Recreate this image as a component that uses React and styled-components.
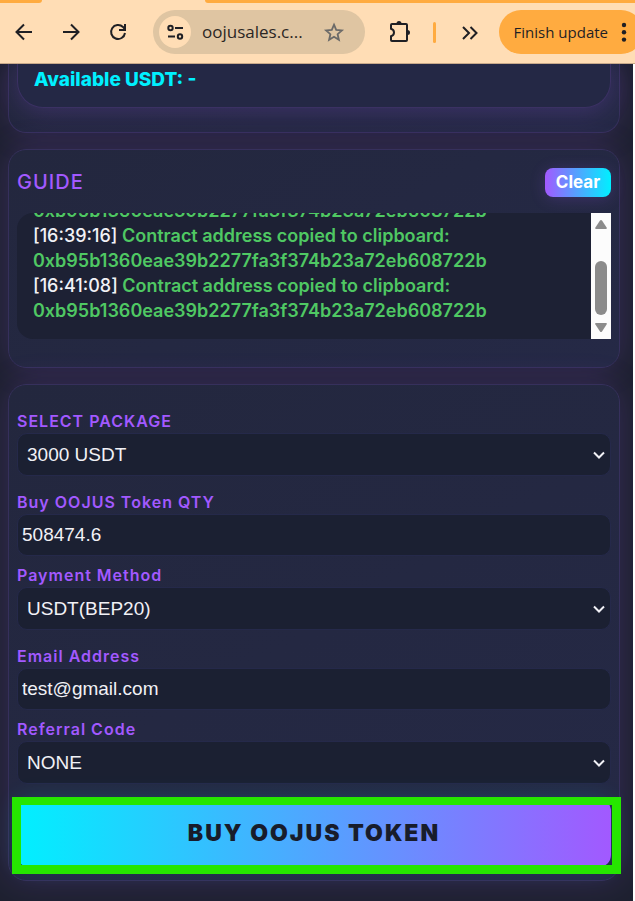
import React, { useState } from "react";
import styled, { createGlobalStyle } from "styled-components";

const GlobalStyle = createGlobalStyle`
  * {
    box-sizing: border-box;
  }

  body {
    margin: 0;
    background: #fff;
    font-family: "Inter", "Liberation Sans", sans-serif;
    overflow-x: hidden;
  }

  button,
  input,
  select {
    font: inherit;
    margin: 0;
  }
`;

/* Browser bar */

const Browser = styled.header`
  background-color: #ffddb5;
  border-bottom: 1px solid #c8a98a;
  overflow: hidden;
`;

const TabStrip = styled.div`
  height: 3px;
  display: flex;
  background-color: #ffddb5;
`;

const TabEdge = styled.div`
  background-color: #ffab40;
  height: 3px;
  flex: ${(props) => (props.$grow ? "1" : "0 0 42px")};
  border-radius: ${(props) => (props.$grow ? "0 0 0 6px" : "0 0 6px 0")};
`;

const ActiveTab = styled.div`
  width: 163px;
`;

const Toolbar = styled.div`
  height: 60px;
  display: flex;
  align-items: center;
  padding-left: 12px;
  padding-bottom: 2px;
`;

const IconButton = styled.button`
  background: none;
  border: none;
  padding: 0;
  width: 24px;
  height: 24px;
  flex: none;
  margin-right: ${(props) => props.$space || 0}px;
  color: #1f1f24;
  cursor: pointer;

  svg {
    display: block;
  }
`;

const UrlPill = styled.div`
  flex: 1;
  min-width: 0;
  height: 44px;
  display: flex;
  align-items: center;
  margin-right: 23px;
  padding: 0 19px 0 6px;
  border-radius: 22px;
  background-color: #dfc5a2;
`;

const SiteInfo = styled.button`
  width: 32px;
  height: 32px;
  flex: none;
  padding: 4px;
  border: none;
  border-radius: 50%;
  background-color: #ffddb5;
  color: #1f1f24;

  svg {
    display: block;
  }
`;

const Url = styled.span`
  flex: 1;
  min-width: 0;
  margin-left: 11px;
  font-family: "Open Sans", "Noto Sans", sans-serif;
  font-size: 17px;
  line-height: 24px;
  white-space: nowrap;
  color: #2b2724;
`;

const Divider = styled.div`
  width: 3px;
  height: 21px;
  flex: none;
  margin-right: 22px;
  border-radius: 2px;
  background-color: #ffab40;
`;

const UpdateButton = styled.button`
  height: 44px;
  flex: none;
  display: flex;
  align-items: center;
  gap: 4px;
  margin-right: -8px;
  padding: 0 7px 0 15px;
  border: none;
  border-radius: 22px;
  background-color: #ffab40;
  color: #1f1f24;
  font-family: "Open Sans", "Noto Sans", sans-serif;
  font-size: 15px;
  white-space: nowrap;
`;

/* Page */

const Page = styled.main`
  margin-right: 2px;
  padding: 0 13px 20px 8px;
  display: flex;
  flex-direction: column;
  gap: 16px;
  overflow: hidden;
  background-color: #1e2130;
`;

const Card = styled.section`
  padding: ${(props) => props.$padding};
  border: 1px solid #36305c;
  border-radius: 18px;
  background: linear-gradient(150deg, #23273e, #252946);
  box-shadow: 0 0 32px rgba(162, 89, 255, 0.18);
`;

const TopCard = styled(Card)`
  border-top: none;
  border-radius: 0 0 18px 18px;
`;

const Balance = styled.div`
  padding: 4px 16px 15px;
  border: 1px solid #3b3163;
  border-top: none;
  border-radius: 0 0 26px 26px;
  background-color: #242845;
  box-shadow: 0 4px 24px rgba(162, 89, 255, 0.2);
  color: #00f0ff;
  font-size: 19px;
  font-weight: 800;
  line-height: 24px;
`;

const GuideHeader = styled.div`
  display: flex;
  align-items: center;
  justify-content: space-between;
  margin-bottom: 16px;
`;

const GuideTitle = styled.h2`
  margin: 0;
  color: #a259ff;
  font-size: 20px;
  font-weight: 500;
  line-height: 29px;
  letter-spacing: 1px;
`;

const ClearButton = styled.button`
  height: 29px;
  width: 66px;
  padding: 0 0 2px;
  border: none;
  border-radius: 8px;
  background: linear-gradient(90deg, #a259ff, #00f0ff);
  box-shadow: 0 2px 16px rgba(162, 89, 255, 0.2);
  color: #fff;
  font-size: 17px;
  font-weight: 700;
  cursor: pointer;
`;

const LogBox = styled.div`
  height: 126px;
  display: flex;
  border-radius: 16px 0 0 16px;
  background-color: #1d2134;
  overflow: hidden;
`;

const LogLines = styled.div`
  flex: 1;
  display: flex;
  flex-direction: column;
  justify-content: flex-end;
  padding: 0 16px 16px;
  color: #4fc863;
  font-size: 18px;
  font-weight: 600;
  line-height: 25px;
`;

const LogLine = styled.div`
  flex: none;
`;

const Time = styled.span`
  color: #f1f1f6;
  font-weight: 500;
`;

const Scrollbar = styled.div`
  width: 20px;
  display: flex;
  flex-direction: column;
  align-items: center;
  padding: 4px 0 6px;
  background-color: #fcfcfc;

  svg {
    display: block;
  }
`;

const Thumb = styled.div`
  width: 12px;
  height: 54px;
  margin: auto 0 6px;
  border-radius: 6px;
  background-color: #8b8b8b;
`;

const Form = styled.form`
  display: flex;
  flex-direction: column;
`;

const Field = styled.div`
  display: flex;
  flex-direction: column;
  margin-bottom: ${(props) => (props.$select ? 14 : 7)}px;
`;

const Label = styled.label`
  color: #a259ff;
  font-size: 16px;
  font-weight: 600;
  line-height: 24px;
  letter-spacing: 1px;
`;

const Input = styled.input`
  width: 100%;
  height: 42px;
  padding: 0 4px;
  border: 1px solid #25294a;
  border-radius: 10px;
  background-color: #1b2032;
  color: #f1f1f6;
  font-family: "Liberation Sans", Arial, sans-serif;
  font-size: 19px;
  outline: none;
`;

const SelectWrap = styled.div`
  display: flex;
  align-items: center;
  height: 43px;
  padding-right: 5px;
  border: 1px solid #25294a;
  border-radius: 10px;
  background-color: #1b2032;
  color: #f1f1f6;

  svg {
    flex: none;
    margin-left: -12px;
    pointer-events: none;
  }
`;

const Select = styled.select`
  flex: 1;
  height: 41px;
  padding: 0 20px 0 9px;
  border: none;
  appearance: none;
  background: transparent;
  color: #f1f1f6;
  font-family: "Liberation Sans", Arial, sans-serif;
  font-size: 19px;
  outline: none;
`;

const BuyArea = styled.div`
  position: relative;
  padding-top: 1px;
`;

const BuyButton = styled.button`
  display: block;
  width: 100%;
  height: 68px;
  border: none;
  border-radius: 12px;
  background: linear-gradient(90deg, #00f0ff, #a259ff);
  box-shadow: 0 0 24px rgba(0, 240, 255, 0.16);
  color: #181c2b;
  font-size: 23px;
  font-weight: 900;
  letter-spacing: 2px;
  cursor: pointer;
`;

const Marker = styled.div`
  position: absolute;
  inset: -1px -10px -7px -5px;
  border: 9px solid #26e600;
  border-top-width: 8px;
  pointer-events: none;
`;

const ADDRESS = "0xb95b1360eae39b2277fa3f374b23a72eb608722b";

const BackIcon = () => (
  <svg width="24" height="24" fill="none" stroke="currentColor" strokeWidth="2">
    <path d="M20 12H5M12 4.5 4.5 12l7.5 7.5" />
  </svg>
);

const ForwardIcon = () => (
  <svg width="24" height="24" fill="none" stroke="currentColor" strokeWidth="2">
    <path d="M4 12h15M12 4.5l7.5 7.5-7.5 7.5" />
  </svg>
);

const ReloadIcon = () => (
  <svg width="24" height="24" fill="none" stroke="currentColor" strokeWidth="2">
    <path d="M19 13a7 7 0 1 1-2-6l2 2.5" />
    <path d="M19 4v6h-6" />
  </svg>
);

const TuneIcon = () => (
  <svg width="24" height="24" fill="none" stroke="currentColor" strokeWidth="2">
    <circle cx="7.5" cy="8" r="2.2" />
    <circle cx="17" cy="16.5" r="2.2" />
    <path d="M12 8h8M5 16.5h7" />
  </svg>
);

const StarIcon = () => (
  <svg width="24" height="24" fill="none" stroke="#6b6a68" strokeWidth="1.8">
    <path d="M12 4.7l2.2 5.2 5.7.5-4.3 3.800 1.300 5.600-4.900-3-4.900 3 1.300-5.600-4.300-3.800 5.700-.5z" />
  </svg>
);

const PuzzleIcon = () => (
  <svg width="24" height="24" fill="none" stroke="currentColor" strokeWidth="2">
    <path d="M3 5q0-1 1-1h14q1 0 1 1v15q0 1-1 1H4q-1 0-1-1v-3.700c4-1 4-6.600 0-7.600z" />
    <path
      d="M8.500 3.500a2.500 2.500 0 0 1 5 0zM19.500 10a2.500 2.500 0 0 1 0 5z"
      fill="currentColor"
      stroke="none"
    />
  </svg>
);

const MoreIcon = () => (
  <svg width="24" height="24" fill="none" stroke="currentColor" strokeWidth="2">
    <path d="M5 7l6 6-6 6M12.500 7l6 6-6 6" />
  </svg>
);

const DotsIcon = () => (
  <svg width="24" height="24" fill="currentColor">
    <circle cx="12" cy="5" r="2.200" />
    <circle cx="12" cy="12.300" r="2.200" />
    <circle cx="12" cy="19.600" r="2.200" />
  </svg>
);

const Chevron = () => (
  <svg width="12" height="8" fill="none" stroke="currentColor" strokeWidth="2">
    <path d="M1 1.500l5 5 5-5" />
  </svg>
);

const ScrollArrow = ({ down }) => (
  <svg width="14" height="12" fill="#8b8b8b">
    <path
      d={
        down
          ? "M2 2h10q1.500 0 .6 1.400L8 10.500q-1 1-2 0L1.400 3.400Q.5 2 2 2z"
          : "M2 12h10q1.500 0 .6-1.400L8 3.500q-1-1-2 0L1.400 10.600Q.5 12 2 12z"
      }
    />
  </svg>
);

const SelectField = ({ id, label, options }) => (
  <Field $select>
    <Label htmlFor={id}>{label}</Label>
    <SelectWrap>
      <Select id={id}>
        {options.map((option) => (
          <option key={option}>{option}</option>
        ))}
      </Select>
      <Chevron />
    </SelectWrap>
  </Field>
);

const InputField = ({ id, label, type, value }) => (
  <Field>
    <Label htmlFor={id}>{label}</Label>
    <Input id={id} type={type} defaultValue={value} />
  </Field>
);

const BrowserBar = () => (
  <Browser>
    <TabStrip>
      <TabEdge />
      <ActiveTab />
      <TabEdge $grow />
    </TabStrip>
    <Toolbar>
      <IconButton aria-label="Back" $space={23}>
        <BackIcon />
      </IconButton>
      <IconButton aria-label="Forward" $space={23}>
        <ForwardIcon />
      </IconButton>
      <IconButton aria-label="Reload" $space={23}>
        <ReloadIcon />
      </IconButton>
      <UrlPill>
        <SiteInfo aria-label="Site information">
          <TuneIcon />
        </SiteInfo>
        <Url>oojusales.c...</Url>
        <IconButton aria-label="Bookmark">
          <StarIcon />
        </IconButton>
      </UrlPill>
      <IconButton aria-label="Extensions" $space={21}>
        <PuzzleIcon />
      </IconButton>
      <Divider />
      <IconButton aria-label="More" $space={17}>
        <MoreIcon />
      </IconButton>
      <UpdateButton>
        Finish update
        <DotsIcon />
      </UpdateButton>
    </Toolbar>
  </Browser>
);

const App = () => {
  const [logs, setLogs] = useState([
    { id: 1, address: ADDRESS },
    {
      id: 2,
      time: "16:39:16",
      text: "Contract address copied to clipboard:",
      address: ADDRESS,
    },
    {
      id: 3,
      time: "16:41:08",
      text: "Contract address copied to clipboard:",
      address: ADDRESS,
    },
  ]);

  return (
    <>
      <GlobalStyle />
      <BrowserBar />
      <Page>
        <TopCard $padding="0 8px 24px">
          <Balance>Available USDT: -</Balance>
        </TopCard>

        <Card $padding="18px 8px 28px">
          <GuideHeader>
            <GuideTitle>GUIDE</GuideTitle>
            <ClearButton onClick={() => setLogs([])}>Clear</ClearButton>
          </GuideHeader>
          <LogBox>
            <LogLines>
              {logs.map((log) => (
                <React.Fragment key={log.id}>
                  {log.time && (
                    <LogLine>
                      <Time>[{log.time}]</Time> {log.text}
                    </LogLine>
                  )}
                  <LogLine>{log.address}</LogLine>
                </React.Fragment>
              ))}
            </LogLines>
            <Scrollbar>
              <ScrollArrow />
              <Thumb />
              <ScrollArrow down />
            </Scrollbar>
          </LogBox>
        </Card>

        <Card $padding="24px 8px 13px">
          <Form onSubmit={(e) => e.preventDefault()}>
            <SelectField
              id="package"
              label="SELECT PACKAGE"
              options={["3000 USDT"]}
            />
            <InputField
              id="qty"
              label="Buy OOJUS Token QTY"
              type="text"
              value="508474.6"
            />
            <SelectField
              id="method"
              label="Payment Method"
              options={["USDT(BEP20)"]}
            />
            <InputField
              id="email"
              label="Email Address"
              type="email"
              value="test@gmail.com"
            />
            <SelectField
              id="referral"
              label="Referral Code"
              options={["NONE"]}
            />
            <BuyArea>
              <BuyButton type="submit">BUY OOJUS TOKEN</BuyButton>
              <Marker />
            </BuyArea>
          </Form>
        </Card>
      </Page>
    </>
  );
};

export default App;
